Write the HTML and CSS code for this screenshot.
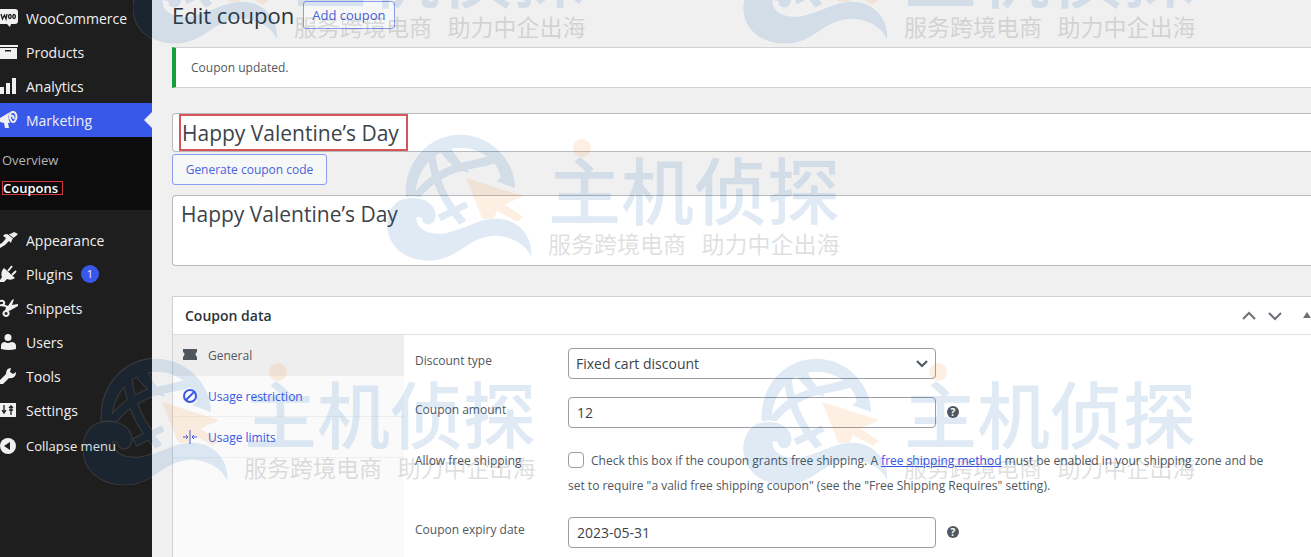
FILE: index.html
```
<!DOCTYPE html>
<html lang="en">
<head>
    <meta charset="utf-8">
    <title>Edit coupon</title>
    <link rel="stylesheet" href="styles.css">
</head>
<body>
    <!-- shared shapes for the watermark -->
    <svg class="defs" width="0" height="0" aria-hidden="true">
        <defs>
            <g id="globe">
                <path d="M76 232C70 120 150 44 240 44C330 44 404 120 404 204L348 184L362 172C350 120 300 83 240 83C170 83 110 140 106 222L122 232L96 229Z"/>
                <path d="M178 92L212 84Q236 125 268 160L246 152L236 152Q200 125 178 92Z"/>
                <path d="M98 222Q165 140 262 124Q320 112 352 96L366 124Q320 140 268 148Q180 162 120 232Z"/>
                <path d="M144 118L166 104Q176 210 258 302L238 314Q158 225 144 118Z"/>
                <path d="M172 284L256 244L264 262L182 304Z"/>
                <path d="M76 236C120 228 160 245 165 280C168 306 150 320 132 310C122 302 134 290 108 292C108 330 145 344 188 341C250 330 290 296 350 296C415 298 458 350 452 408C430 362 370 340 320 350C260 362 240 405 170 420C90 430 24 390 21 318C20 280 40 240 76 236Z"/>
            </g>
            <symbol id="mark" viewBox="20 42 435 381">
                <use href="#globe" class="mark-halo"/>
                <use href="#globe" class="mark-blue"/>
                <path class="mark-orange" d="M258 175L428 228L372 254L428 290L410 305L350 272L340 296L306 296Z"/>
            </symbol>
        </defs>
    </svg>

    <div class="page">
        <nav class="sidebar">
            <ul class="menu">
                <li><a href="#">
                    <svg class="icon" viewBox="0 0 18 18"><path d="M0 0h15q3 0 3 3v9q0 3-3 3h-4l-1 3-3-3H0z"/><path class="ink" d="M1 5l1.500 5 2-4 1.500 4L7 5M9.800 5.500a1.300 2 0 1 0 .1 0M14 5.500a1.300 2 0 1 0 .1 0"/></svg>
                    WooCommerce</a></li>
                <li><a href="#">
                    <svg class="icon" viewBox="0 0 18 18"><path d="M0 2h18v2H0zM0 5h17v11H0zM5 7v1.500h6V7z" fill-rule="evenodd"/></svg>
                    Products</a></li>
                <li><a href="#">
                    <svg class="icon" viewBox="0 0 18 18"><path d="M0 10h4v7H0zM6 6h4v11H6zM12 1h4v16h-4z"/></svg>
                    Analytics</a></li>
                <li class="current"><a href="#">
                    <svg class="icon" viewBox="0 0 18 18"><path d="M0 7L10 1Q7 6 10 12L8 12l1 5H5L4 12 0 11z"/><path class="line" d="M11 1.500C16-1 18 6 15 10 12 14 8 6 11 1.500M11 5q3-1 2.500 3"/></svg>
                    Marketing</a></li>
            </ul>
            <ul class="submenu">
                <li><a href="#">Overview</a></li>
                <li><a href="#" class="active marked">Coupons</a></li>
            </ul>
            <ul class="menu">
                <li><a href="#">
                    <svg class="icon" viewBox="0 0 18 18"><path d="M5 3q5 1 9-2l4 2-2 2q-4 2-5 7L9 10Q5 15 0 17v-4q3-1 6-6L3 5z"/><path class="slit" d="M8 3l6 5"/></svg>
                    Appearance</a></li>
                <li><a href="#">
                    <svg class="icon" viewBox="0 0 18 18"><path d="M4 3l11 10q-4 3-8 1l-3 3H0v-2l2-3Q0 7 4 3z"/><path class="line" d="M8 6l4-5M12 10l4-4"/></svg>
                    Plugins <span class="count">1</span></a></li>
                <li><a href="#">
                    <svg class="icon" viewBox="0 0 18 18"><path class="line" d="M0 2q5-1 4 3Q2 7 0 6M6 12a2.500 2.500 0 1 0 .1 0"/><path d="M3 5l5 2 4-6 2-1-2 6 6-1v2l-7 4-4 2-2-1 1-4-5-1z"/></svg>
                    Snippets</a></li>
                <li><a href="#">
                    <svg class="icon" viewBox="0 0 18 18"><circle cx="8" cy="4.500" r="3.500"/><path d="M1 16v-3q0-4 4-4 3 2 6 0 5 0 5 4v3q-7 2-15 0z"/></svg>
                    Users</a></li>
                <li><a href="#">
                    <svg class="icon" viewBox="0 0 18 18"><path d="M16 5l-3 2-3-2 1-4Q6 1 6 7L0 13v4h3l6-6q7 1 7-6z"/></svg>
                    Tools</a></li>
                <li><a href="#">
                    <svg class="icon" viewBox="0 0 18 18"><path d="M0 2h16v14H0z"/><path class="ink" d="M4 4v9M2 9l2 3 2-3M11 5v9M9 7l2-2 2 2M9 9h4"/></svg>
                    Settings</a></li>
            </ul>
            <button type="button" class="collapse">
                <svg class="icon" viewBox="0 0 18 18"><circle cx="8" cy="9" r="8"/><path class="hole" d="M10 5v8L4 9z"/></svg>
                Collapse menu
            </button>
        </nav>

        <main class="content">
            <header class="heading">
                <h1>Edit coupon</h1>
                <a href="#" class="button add">Add coupon</a>
            </header>

            <div class="notice">Coupon updated.</div>

            <form class="coupon">
                <div class="code-box">
                    <input type="text" class="code" aria-label="Coupon code" value="Happy Valentine’s Day">
                </div>
                <button type="button" class="button generate">Generate coupon code</button>
                <textarea class="description" aria-label="Description">Happy Valentine’s Day</textarea>

                <section class="panel">
                    <div class="panel-head">
                        <h2>Coupon data</h2>
                        <div class="panel-actions">
                            <button type="button" aria-label="Move up"><svg viewBox="0 0 14 14"><path d="M1 10l6-6 6 6"/></svg></button>
                            <button type="button" aria-label="Move down"><svg viewBox="0 0 14 14"><path d="M1 4l6 6 6-6"/></svg></button>
                            <button type="button" class="toggle" aria-label="Toggle panel"><svg viewBox="0 0 8 14"><path d="M0 9l4-6 4 6z"/></svg></button>
                        </div>
                    </div>
                    <div class="panel-body">
                        <ul class="tabs">
                            <li class="active"><a href="#">
                                <svg viewBox="0 0 14 14"><path class="solid" d="M0 1h14v3q-3 2 0 5v3H0V9q3-3 0-5z"/></svg>
                                General</a></li>
                            <li><a href="#">
                                <svg viewBox="0 0 14 14"><circle cx="7" cy="7" r="6"/><path d="M3 11l8-8"/></svg>
                                Usage restriction</a></li>
                            <li><a href="#">
                                <svg class="thin" viewBox="0 0 14 14"><path d="M7 0v14M0 7h5M9 7h5M3 5l2 2-2 2M11 5L9 7l2 2"/></svg>
                                Usage limits</a></li>
                        </ul>
                        <div class="fields">
                            <div class="field">
                                <label for="type">Discount type</label>
                                <div class="select">
                                    <select id="type"><option>Fixed cart discount</option></select>
                                    <svg viewBox="0 0 12 12"><path d="M1 3l5 5 5-5"/></svg>
                                </div>
                            </div>
                            <div class="field">
                                <label for="amount">Coupon amount</label>
                                <input type="text" id="amount" value="12">
                                <span class="help">?</span>
                            </div>
                            <div class="field shipping">
                                <label for="free">Allow free shipping</label>
                                <p><input type="checkbox" id="free">Check this box if the coupon grants free shipping. A <a href="#">free shipping method</a> must be enabled in your shipping zone and be<br>set to require "a valid free shipping coupon" (see the "Free Shipping Requires" setting).</p>
                            </div>
                            <div class="field">
                                <label for="expiry">Coupon expiry date</label>
                                <input type="text" id="expiry" value="2023-05-31">
                                <span class="help">?</span>
                            </div>
                        </div>
                    </div>
                </section>
            </form>
        </main>

        <div class="watermark wm-top-left" aria-hidden="true">
            <svg class="mark"><use href="#mark"/></svg>
            <div class="wm-text"><b>主机侦探</b><span>服务跨境电商&nbsp;&nbsp; 助力中企出海</span></div>
        </div>
        <div class="watermark wm-top-right" aria-hidden="true">
            <svg class="mark"><use href="#mark"/></svg>
            <div class="wm-text"><b>主机侦探</b><span>服务跨境电商&nbsp;&nbsp; 助力中企出海</span></div>
        </div>
        <div class="watermark wm-middle" aria-hidden="true">
            <svg class="mark"><use href="#mark"/></svg>
            <div class="wm-text"><b>主机侦探</b><span>服务跨境电商&nbsp;&nbsp; 助力中企出海</span></div>
        </div>
        <div class="watermark wm-bottom-left" aria-hidden="true">
            <svg class="mark"><use href="#mark"/></svg>
            <div class="wm-text"><b>主机侦探</b><span>服务跨境电商&nbsp;&nbsp; 助力中企出海</span></div>
        </div>
        <div class="watermark wm-bottom-right" aria-hidden="true">
            <svg class="mark"><use href="#mark"/></svg>
            <div class="wm-text"><b>主机侦探</b><span>服务跨境电商&nbsp;&nbsp; 助力中企出海</span></div>
        </div>
    </div>
</body>
</html>
```
FILE: styles.css
```
* {
    box-sizing: border-box;
}
body {
    margin: 0;
    background: #f0f0f0;
    color: #50575e;
    font-family: "Open Sans", "Noto Sans", "Noto Sans CJK SC", sans-serif;
    font-size: 13px;
    overflow: hidden;
}
ul {
    list-style: none;
    margin: 0;
    padding: 0;
}
a {
    color: #3858e9;
}
button, input, select, textarea {
    font: inherit;
    color: #3c434a;
}
.defs {
    position: absolute;
}
.page {
    position: relative;
    display: flex;
    min-height: 100vh;
    overflow: hidden;
}

/* sidebar */
.sidebar {
    width: 152px;
    flex-shrink: 0;
    padding-top: 1px;
    background: #1e1e1e;
}
.menu a, .collapse {
    display: flex;
    align-items: center;
    gap: 8px;
    width: 100%;
    height: 34px;
    color: #f0f0f1;
    font-size: 14px;
    text-decoration: none;
}
.collapse {
    margin-top: 2px;
    padding: 0;
    border: 0;
    background: none;
    font-size: 13px;
}
.icon {
    width: 18px;
    height: 18px;
    fill: #f0f0f1;
}
.icon .ink {
    fill: none;
    stroke: #1e1e1e;
    stroke-width: 1.3;
}
.icon .line {
    fill: none;
    stroke: #f0f0f1;
    stroke-width: 2;
}
.icon .slit {
    stroke: #1e1e1e;
}
.icon .hole {
    fill: #1e1e1e;
}
.menu .current {
    position: relative;
    background: #3858e9;
}
.menu .current::after {
    content: "";
    position: absolute;
    right: 0;
    top: 9px;
    border: 8px solid transparent;
    border-left: 0;
    border-right-color: #f0f0f0;
}
.count {
    width: 18px;
    height: 18px;
    border-radius: 9px;
    background: #3858e9;
    font-size: 11px;
    line-height: 18px;
    text-align: center;
}
.submenu {
    height: 73px;
    margin-bottom: 13px;
    padding: 9px 2px;
    background: #0c0c0c;
}
.submenu li {
    height: 28px;
    display: flex;
    align-items: center;
}
.submenu a {
    color: #b4b5b7;
    text-decoration: none;
}
.submenu .active {
    color: #fff;
    font-weight: 600;
}
.submenu .marked {
    width: 61px;
    border: 1px solid #d3363c;
    line-height: 12px;
}

/* main column */
.content {
    flex: 1;
    min-width: 0;
    padding-left: 20px;
}
.heading {
    display: flex;
    align-items: center;
    gap: 9px;
    height: 30px;
}
h1 {
    margin: 0;
    color: #2c3338;
    font-size: 22px;
    font-weight: 400;
}
.button {
    padding: 0 8px;
    border: 1px solid #8a9bf0;
    border-radius: 3px;
    background: #f6f7f7;
    color: #4a62dc;
    line-height: 26px;
    text-decoration: none;
}
.add {
    font-weight: 500;
}
.notice {
    height: 41px;
    margin: 17px 0 25px;
    padding-left: 15px;
    border: 1px solid #d0d1d3;
    border-left: 4px solid #16a03c;
    border-right: 0;
    background: #fff;
    font-size: 12px;
    line-height: 40px;
}
.coupon {
    display: flex;
    flex-direction: column;
    align-items: flex-start;
}
.code-box {
    width: 100%;
    height: 39px;
    padding-left: 6px;
    border: 1px solid #b6b9bd;
    border-right: 0;
    border-radius: 4px 0 0 4px;
    background: #fff;
}
.code {
    width: 229px;
    height: 37px;
    padding: 0 0 0 1px;
    border: 2px solid #d6555b;
    background: none;
    font-size: 21px;
}
.generate {
    width: 155px;
    height: 31px;
    margin: 2px 0 10px;
    font-size: 12px;
}
.description {
    width: 100%;
    height: 71px;
    padding: 4px 8px;
    border: 1px solid #b6b9bd;
    border-right: 0;
    border-radius: 4px 0 0 4px;
    font-size: 21px;
    resize: none;
}
.panel {
    width: 100%;
    margin-top: 30px;
    border: 1px solid #d0d1d3;
    border-width: 1px 0 0 1px;
    background: #fff;
}
.panel-head {
    display: flex;
    align-items: center;
    justify-content: space-between;
    height: 38px;
    padding-left: 12px;
    border-bottom: 1px solid #dfe0e1;
}
h2 {
    margin: 0;
    color: #2c3338;
    font-size: 14px;
    font-weight: 600;
}
.panel-actions {
    display: flex;
    gap: 12px;
}
.panel-actions button {
    display: flex;
    padding: 0;
    border: 0;
    background: none;
}
.panel-actions svg {
    width: 14px;
    height: 14px;
    fill: none;
    stroke: #6c7177;
    stroke-width: 2;
}
.panel-actions .toggle {
    margin-left: 9px;
}
.panel-actions .toggle svg {
    width: 8px;
    fill: #6c7177;
    stroke: none;
}
.panel-body {
    display: flex;
    min-height: 230px;
}
.tabs {
    width: 231px;
    flex-shrink: 0;
    background: #fafafa;
    font-size: 12px;
}
.tabs a {
    display: flex;
    align-items: center;
    gap: 11px;
    height: 41px;
    padding-left: 10px;
    border-bottom: 1px solid #eee;
    text-decoration: none;
}
.tabs .active a {
    background: #eee;
    color: #50575e;
}
.tabs svg {
    width: 14px;
    height: 14px;
    fill: none;
    stroke: currentColor;
    stroke-width: 2;
}
.tabs .thin {
    stroke-width: 1;
}
.tabs .solid {
    fill: currentColor;
    stroke: none;
}
.fields {
    flex: 1;
    padding: 13px 0 0 11px;
    font-size: 12px;
}
.field {
    display: flex;
    margin-bottom: 18px;
}
.field label {
    width: 153px;
    flex-shrink: 0;
    line-height: 26px;
}
.field input[type="text"], .field select {
    width: 368px;
    height: 31px;
    padding: 0 8px;
    border: 1px solid #9a9ea3;
    border-radius: 4px;
    background: #fff;
    font-size: 14px;
}
.field select {
    padding-left: 7px;
    appearance: none;
}
.select {
    position: relative;
}
.select svg {
    position: absolute;
    right: 8px;
    top: 10px;
    width: 12px;
    height: 12px;
    fill: none;
    stroke: #50575e;
    stroke-width: 2;
}
.help {
    width: 12px;
    height: 12px;
    margin: 9px 0 0 11px;
    border-radius: 6px;
    background: #50575e;
    color: #fff;
    font-size: 10px;
    font-weight: 700;
    line-height: 12px;
    text-align: center;
}
.shipping {
    margin-top: 20px;
    margin-bottom: 19px;
}
.shipping p {
    margin: 0;
    line-height: 25px;
}
.shipping input {
    width: 16px;
    height: 16px;
    margin: 0 7px 0 0;
    border: 1px solid #9a9ea3;
    border-radius: 4px;
    background: #fff;
    vertical-align: -3px;
    appearance: none;
}

/* watermark laid over the whole page */
.watermark {
    position: absolute;
    display: flex;
    gap: 16px;
    opacity: 0.12;
    pointer-events: none;
    white-space: nowrap;
}
.mark {
    width: 145px;
    height: 127px;
}
.mark-halo {
    fill: #fff;
    stroke: #fff;
    stroke-width: 6;
}
.mark-blue {
    fill: #005ab4;
}
.mark-orange {
    fill: #f08214;
}
.wm-text {
    position: relative;
    display: flex;
    flex-direction: column;
    padding-top: 17px;
    font-family: "Noto Sans CJK SC", sans-serif;
}
.wm-text::before {
    content: "";
    position: absolute;
    left: 25px;
    top: 5px;
    width: 18px;
    height: 18px;
    border-radius: 9px;
    background: #f08214;
}
.wm-text b {
    color: #005ab4;
    font-size: 73px;
    font-weight: 500;
    line-height: 72px;
}
.wm-text span {
    color: #000;
    font-size: 23px;
    line-height: 40px;
}
.wm-top-left {
    left: 133px;
    top: -83px;
}
.wm-top-right {
    left: 743px;
    top: -83px;
}
.wm-middle {
    left: 387px;
    top: 134px;
}
.wm-bottom-left {
    left: 83px;
    top: 358px;
}
.wm-bottom-right {
    left: 743px;
    top: 358px;
}
```
